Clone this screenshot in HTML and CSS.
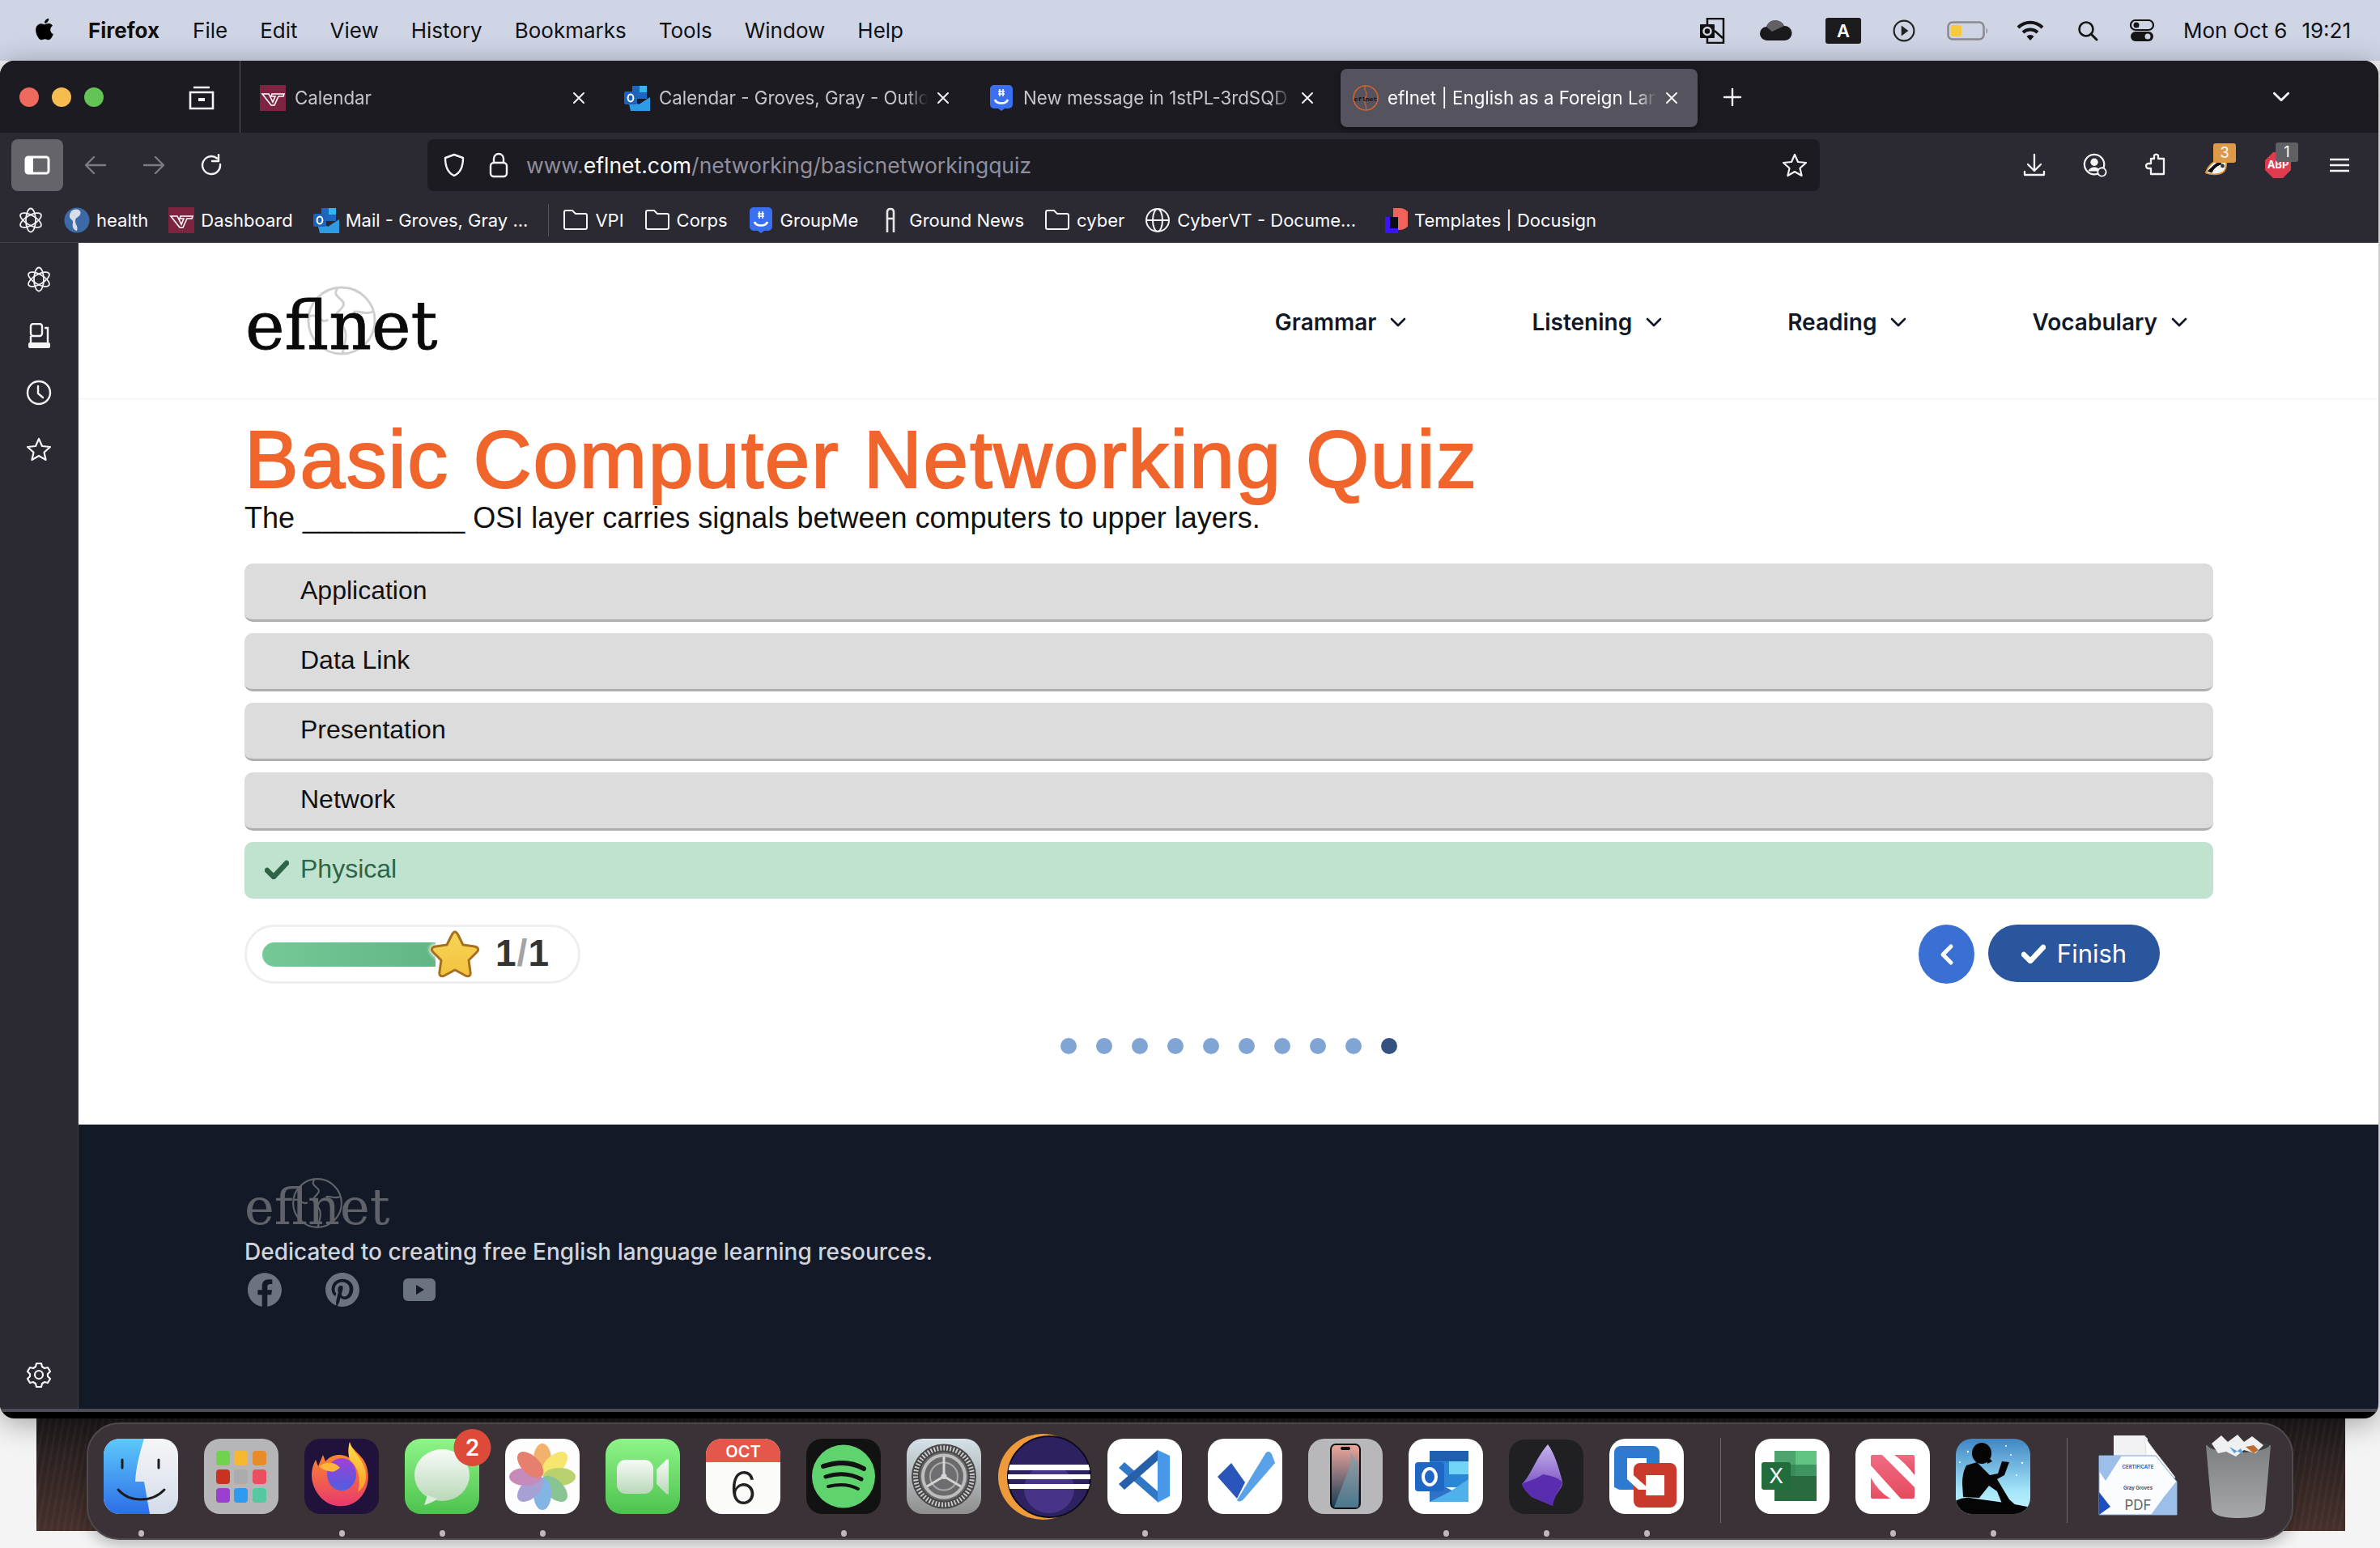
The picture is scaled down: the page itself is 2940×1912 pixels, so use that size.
FILE: index.html
```html
<!DOCTYPE html>
<html lang="en">

<head>
    <meta charset="UTF-8">
    <title>eflnet | English as a Foreign Language</title>
    <link rel="stylesheet" href="styles.css">
</head>

<body>
    <!-- shared icons -->
    <svg class="defs" aria-hidden="true">
        <defs>
            <linearGradient id="gFinder" x1="0" y1="0" x2="0" y2="1"><stop offset="0" stop-color="#5cc9fb"/><stop offset="1" stop-color="#2e6ee8"/></linearGradient>
            <linearGradient id="gFinderR" x1="0" y1="0" x2="0" y2="1"><stop offset="0" stop-color="#f6f6f8"/><stop offset="1" stop-color="#d4dcea"/></linearGradient>
            <linearGradient id="gGreen" x1="0" y1="0" x2="0" y2="1"><stop offset="0" stop-color="#8ef588"/><stop offset="1" stop-color="#4dc24e"/></linearGradient>
            <linearGradient id="gBubble" x1="0" y1="0" x2="0" y2="1"><stop offset="0" stop-color="#f8fbf7"/><stop offset="1" stop-color="#b9d8b9"/></linearGradient>
            <linearGradient id="gFox" x1="0" y1="0" x2="0" y2="1"><stop offset="0" stop-color="#ff9a1f"/><stop offset="1" stop-color="#e8386e"/></linearGradient>
            <linearGradient id="gFlame" x1="0" y1="0" x2="0" y2="1"><stop offset="0" stop-color="#ffe04a"/><stop offset="1" stop-color="#ff9b2a"/></linearGradient>
            <linearGradient id="gFoxIn" x1="0" y1="0" x2="0" y2="1"><stop offset="0" stop-color="#a13fd8"/><stop offset="1" stop-color="#4d5fe0"/></linearGradient>
            <linearGradient id="gSet" x1="0" y1="0" x2="0" y2="1"><stop offset="0" stop-color="#d5e2e8"/><stop offset="1" stop-color="#8e8e8c"/></linearGradient>
            <linearGradient id="gKindle" x1="0" y1="0" x2="0" y2="1"><stop offset="0" stop-color="#3f86c4"/><stop offset=".7" stop-color="#a5e6fa"/><stop offset="1" stop-color="#c6f4ff"/></linearGradient>
            <linearGradient id="gTrash" x1="0" y1="0" x2="0" y2="1"><stop offset="0" stop-color="#7c8082"/><stop offset="1" stop-color="#a6a8a9"/></linearGradient>
            <linearGradient id="gPhone" x1="0" y1="0" x2="0" y2="1"><stop offset="0" stop-color="#f2a79c"/><stop offset="1" stop-color="#123a55"/></linearGradient>
            <linearGradient id="gStar" x1="0" y1="0" x2="0" y2="1"><stop offset="0" stop-color="#f8d558"/><stop offset="1" stop-color="#f2c23e"/></linearGradient>
            <linearGradient id="gObs" x1="0" y1="0" x2="0" y2="1"><stop offset="0" stop-color="#c8b4ef"/><stop offset="1" stop-color="#5a2db0"/></linearGradient>
            <linearGradient id="gNews" x1="0" y1="0" x2="0" y2="1"><stop offset="0" stop-color="#ef6c82"/><stop offset="1" stop-color="#e64a5f"/></linearGradient>

            <clipPath id="clipIcon"><rect width="92" height="93" rx="20"/></clipPath>
            <clipPath id="clipEclipse"><ellipse cx="52" cy="47" rx="51" ry="50"/></clipPath>

            <symbol id="vt" viewBox="0 0 32 32">
                <rect width="32" height="32" fill="#7d2440"/>
                <path d="M3 11h8l5 10 3-7h-5l1-3h15l-1 3h-6l-5 11h-4z" fill="none" stroke="#fff" stroke-width="1.6"/>
            </symbol>
            <symbol id="outlook" viewBox="0 0 32 32">
                <path d="M10 1h18v16H10z" fill="#1f66c1"/>
                <path d="M19 1h9v8h-9z" fill="#35b4f0"/>
                <path d="M4 15l14 9 14-9v17H8z" fill="#2f9be4"/>
                <rect x="0" y="8" width="16" height="16" rx="2" fill="#1e62bc"/>
                <ellipse cx="8" cy="16" rx="3.4" ry="4.4" fill="none" stroke="#fff" stroke-width="2"/>
            </symbol>
            <symbol id="groupme" viewBox="0 0 28 32">
                <path d="M5 0h18a5 5 0 0 1 5 5v19a5 5 0 0 1-5 5h-5l-4 3-4-3H5a5 5 0 0 1-5-5V5a5 5 0 0 1 5-5z" fill="#3a70f0"/>
                <path d="M6 18c2 6 14 6 16 0" fill="none" stroke="#fff" stroke-width="2.6"/>
                <path d="M12 5v9M16 5v9M10 8h8M10 11h8" stroke="#fff" stroke-width="1.6"/>
            </symbol>
            <symbol id="folder" viewBox="0 0 32 26">
                <path d="M2 22V3q0-2 2-2h8l4 4h12q2 0 2 2v15q0 2-2 2H4q-2 0-2-2z" fill="none" stroke="#f4f4f5" stroke-width="2"/>
            </symbol>
            <symbol id="knot" viewBox="0 0 32 32">
                <g fill="none" stroke="#f2f2f3" stroke-width="1.8">
                    <ellipse cx="16" cy="16" rx="6" ry="14.500"/>
                    <ellipse cx="16" cy="16" rx="6" ry="14.500" transform="rotate(60 16 16)"/>
                    <ellipse cx="16" cy="16" rx="6" ry="14.500" transform="rotate(120 16 16)"/>
                </g>
            </symbol>
            <symbol id="outlineStar" viewBox="0 0 32 32">
                <path d="M16 3l4 9 10 1-7.500 6.800L24.600 29 16 24l-8.600 5 2.100-9.200L2 13l10-1z" fill="none" stroke="#f4f4f5" stroke-width="2.200" stroke-linejoin="round"/>
            </symbol>
            <symbol id="close" viewBox="0 0 16 16">
                <path d="M2 2l12 12M14 2L2 14" stroke="#f4f4f5" stroke-width="2" stroke-linecap="round"/>
            </symbol>
            <symbol id="chev" viewBox="0 0 20 12">
                <path d="M2 2l8 8 8-8" fill="none" stroke="currentColor" stroke-width="2.600" stroke-linecap="round" stroke-linejoin="round"/>
            </symbol>
            <symbol id="check" viewBox="0 0 30 24">
                <path d="M3 13l8 8L27 4" fill="none" stroke="currentColor" stroke-width="6.500" stroke-linecap="round" stroke-linejoin="round"/>
            </symbol>
        </defs>
    </svg>

    <header class="menubar">
        <div class="menu-left">
            <svg class="apple" viewBox="0 0 24 24"><path d="M18.710 19.500c-.83 1.240-1.710 2.450-3.050 2.470-1.340.03-1.770-.79-3.290-.79-1.530 0-2 .77-3.270.82-1.310.05-2.300-1.320-3.140-2.530C4.250 17 2.940 12.450 4.700 9.390c.87-1.520 2.430-2.480 4.120-2.510 1.280-.02 2.500.87 3.290.87.78 0 2.260-1.070 3.810-.91.65.03 2.470.26 3.640 1.980-.09.06-2.170 1.280-2.150 3.810.03 3.020 2.650 4.030 2.680 4.040-.03.07-.42 1.440-1.380 2.830M13 3.500c.73-.83 1.940-1.460 2.940-1.500.13 1.170-.34 2.350-1.040 3.190-.69.85-1.830 1.510-2.950 1.420-.15-1.150.41-2.350 1.050-3.110z"/></svg>
            <b>Firefox</b>
            <span>File</span><span>Edit</span><span>View</span><span>History</span><span>Bookmarks</span><span>Tools</span><span>Window</span><span>Help</span>
        </div>
        <div class="menu-right">
            <svg class="st st-o" viewBox="0 0 32 32"><rect x="10" y="1" width="20" height="30" fill="none" stroke="#111" stroke-width="2.500"/><rect x="1" y="8" width="18" height="17" rx="1" fill="#111"/><circle cx="10" cy="16.500" r="4.500" fill="none" stroke="#d0d5e6" stroke-width="2.500"/><path d="M19 16l10 9" stroke="#111" stroke-width="2.500"/></svg>
            <svg class="st st-c" viewBox="0 0 42 26"><path d="M10 25a8.500 8.500 0 0 1-1-17A12 12 0 0 1 31 7a9 9 0 0 1 1 18z" fill="#1a1a1c"/><path d="M9 8A12 12 0 0 1 31 7L16 14z" fill="#606065"/></svg>
            <span class="st st-a">A</span>
            <svg class="st st-p" viewBox="0 0 26 26"><circle cx="13" cy="13" r="11.500" fill="none" stroke="#222" stroke-width="2"/><path d="M10 7l8 6-8 6z" fill="#222"/></svg>
            <svg class="st st-b" viewBox="0 0 52 24"><rect x="1.500" y="1.500" width="44" height="21" rx="5.500" fill="none" stroke="#8a8a8e" stroke-width="2.500"/><rect x="5" y="5" width="13" height="14" rx="2" fill="#f7c93e"/><path d="M48.500 8.500c2 1 2 6 0 7z" fill="#8a8a8e"/></svg>
            <svg class="st st-w" viewBox="0 0 34 26"><g fill="none" stroke="#151515" stroke-width="4"><path d="M2 9a21 21 0 0 1 30 0"/><path d="M8 15a13 13 0 0 1 18 0"/></g><path d="M12.500 20a6 6 0 0 1 9 0L17 25z" fill="#151515"/></svg>
            <svg class="st st-s" viewBox="0 0 26 26"><circle cx="11" cy="11" r="8.500" fill="none" stroke="#151515" stroke-width="2.600"/><path d="M17 17l7 7" stroke="#151515" stroke-width="3" stroke-linecap="round"/></svg>
            <svg class="st st-k" viewBox="0 0 30 28"><rect x="1" y="1" width="28" height="12" rx="6" fill="none" stroke="#151515" stroke-width="2.200"/><circle cx="8" cy="7" r="3.500" fill="#151515"/><rect x="1" y="15" width="28" height="12" rx="6" fill="#151515"/><circle cx="22" cy="21" r="3.500" fill="#d0d5e6"/></svg>
            <span class="clock">Mon Oct 6</span>
            <span class="clock">19:21</span>
        </div>
    </header>

    <div class="window">
        <div class="tabbar">
            <div class="lights"><i class="red"></i><i class="yellow"></i><i class="green"></i></div>
            <svg class="view-btn" viewBox="0 0 34 30"><path d="M7 2h20M3 8h28v20H3z" fill="none" stroke="#f4f4f5" stroke-width="2.600"/><rect x="13" y="15" width="8" height="4" fill="#f4f4f5"/></svg>
            <div class="tabs">
                <div class="tab"><svg class="fav"><use href="#vt"/></svg><span class="tab-title">Calendar</span><svg class="tab-x"><use href="#close"/></svg></div>
                <div class="tab"><svg class="fav"><use href="#outlook"/></svg><span class="tab-title">Calendar - Groves, Gray - Outlook</span><svg class="tab-x"><use href="#close"/></svg></div>
                <div class="tab"><svg class="fav"><use href="#groupme"/></svg><span class="tab-title">New message in 1stPL-3rdSQD</span><svg class="tab-x"><use href="#close"/></svg></div>
                <div class="tab tab-on">
                    <svg class="fav" viewBox="0 0 32 32"><ellipse cx="16" cy="16" rx="15" ry="15" fill="none" stroke="#d9622b" stroke-width="1.500"/><path d="M16 1c-5 6 5 8 0 14s3 10 0 16" fill="none" stroke="#d9622b" stroke-width="1.200"/><text x="16" y="20" class="fav-text">eflnet</text></svg>
                    <span class="tab-title">eflnet | English as a Foreign Language</span><svg class="tab-x"><use href="#close"/></svg>
                </div>
            </div>
            <svg class="new-tab" viewBox="0 0 24 24"><path d="M12 2v20M2 12h20" stroke="#f4f4f5" stroke-width="2.400" stroke-linecap="round"/></svg>
            <svg class="tab-list"><use href="#chev"/></svg>
        </div>

        <div class="toolbar">
            <div class="side-btn"><svg viewBox="0 0 32 24"><rect x="2" y="2" width="28" height="20" rx="3" fill="none" stroke="#fff" stroke-width="3"/><rect x="2" y="2" width="9" height="20" fill="#fff"/></svg></div>
            <svg class="nav-ic first" viewBox="0 0 28 28"><path d="M26 14H3M12 4L2 14l10 10" fill="none" stroke="#7c7b83" stroke-width="2.400" stroke-linecap="round" stroke-linejoin="round"/></svg>
            <svg class="nav-ic" viewBox="0 0 28 28"><path d="M2 14h23M16 4l10 10-10 10" fill="none" stroke="#7c7b83" stroke-width="2.400" stroke-linecap="round" stroke-linejoin="round"/></svg>
            <svg class="nav-ic" viewBox="0 0 28 28"><path d="M24 13A11 11 0 1 1 20 5.500" fill="none" stroke="#f4f4f5" stroke-width="2.400" stroke-linecap="round"/><path d="M22 1v8h-8" fill="none" stroke="#f4f4f5" stroke-width="2.400" stroke-linejoin="round" stroke-linecap="round"/></svg>
            <div class="urlbar">
                <svg class="url-ic" viewBox="0 0 28 30"><path d="M14 2l11 4c0 10-2 18-11 22C5 24 3 16 3 6z" fill="none" stroke="#f4f4f5" stroke-width="2.400" stroke-linejoin="round"/></svg>
                <svg class="url-ic lock" viewBox="0 0 26 32"><rect x="3" y="13" width="20" height="17" rx="4" fill="none" stroke="#f4f4f5" stroke-width="2.400"/><path d="M7 13V8a6 6 0 0 1 12 0v5" fill="none" stroke="#f4f4f5" stroke-width="2.400"/></svg>
                <div class="url-text">www.<em>eflnet.com</em>/networking/basicnetworkingquiz</div>
                <svg class="url-star"><use href="#outlineStar"/></svg>
            </div>
            <div class="tool-right">
                <svg class="tool-ic" viewBox="0 0 30 30"><path d="M15 2v19M7 14l8 8 8-8M3 23v4h24v-4" fill="none" stroke="#f4f4f5" stroke-width="2.300" stroke-linecap="round" stroke-linejoin="round"/></svg>
                <svg class="tool-ic" viewBox="0 0 32 32"><circle cx="15" cy="15" r="13" fill="none" stroke="#f4f4f5" stroke-width="2.400"/><circle cx="15" cy="12" r="5" fill="#f4f4f5"/><path d="M7 24c2-7 14-7 16 0" fill="#f4f4f5"/><circle cx="25" cy="25" r="5.500" fill="#2b2a33" stroke="#f4f4f5" stroke-width="2"/></svg>
                <svg class="tool-ic" viewBox="0 0 30 30"><path d="M13 3a3 3 0 0 1 5 0v4h7v19H9v-7H6a3 3 0 0 1 0-6h3V7h4z" fill="none" stroke="#f4f4f5" stroke-width="2.300" stroke-linejoin="round"/></svg>
                <div class="ext">
                    <svg class="tool-ic" viewBox="0 0 32 28"><path d="M2 24c2-8 10-16 20-20 4 0 6 2 7 6 0 4 0 10-4 13-6 4-16 4-23 1z" fill="#f4f4f5" stroke="#dd8a35" stroke-width="2"/><path d="M4 22c6-6 10-10 17-14l2 5c-6 2-10 5-13 11z" fill="#0c0c0c"/><circle cx="24" cy="15" r="2.500" fill="#333"/></svg>
                    <span class="badge badge-o">3</span>
                </div>
                <div class="ext">
                    <svg class="tool-ic abp" viewBox="0 0 32 32"><path d="M10 0h12l10 10v12L22 32H10L0 22V10z" fill="#de3a50"/><text x="16" y="20" class="abp-text">ABP</text></svg>
                    <span class="badge badge-g">1</span>
                </div>
                <svg class="tool-ic burger" viewBox="0 0 24 18"><path d="M0 2h24M0 9h24M0 16h24" stroke="#f4f4f5" stroke-width="2.400"/></svg>
            </div>
        </div>

        <div class="bookmarks">
            <svg class="bm-ic"><use href="#knot"/></svg>
            <a class="bm"><svg class="bm-ic" viewBox="0 0 32 32"><circle cx="16" cy="16" r="15.500" fill="#3c69a8"/><path d="M12 3c6-2 10 2 8 6s-6 3-6 8 4 6 2 12c-5-1-6-6-5-10S6 15 7 10s3-6 5-7z" fill="#d8dee8"/></svg>health</a>
            <a class="bm"><svg class="bm-ic"><use href="#vt"/></svg>Dashboard</a>
            <a class="bm"><svg class="bm-ic"><use href="#outlook"/></svg>Mail - Groves, Gray ...</a>
            <i class="bm-sep"></i>
            <a class="bm"><svg class="bm-ic folder"><use href="#folder"/></svg>VPI</a>
            <a class="bm"><svg class="bm-ic folder"><use href="#folder"/></svg>Corps</a>
            <a class="bm"><svg class="bm-ic"><use href="#groupme"/></svg>GroupMe</a>
            <a class="bm"><svg class="bm-ic ground" viewBox="0 0 14 32"><path d="M3 31V6q0-4 4-4t4 4v25M3 14h8" fill="none" stroke="#e6e6e6" stroke-width="2.600"/></svg>Ground News</a>
            <a class="bm"><svg class="bm-ic folder"><use href="#folder"/></svg>cyber</a>
            <a class="bm"><svg class="bm-ic" viewBox="0 0 32 32"><g fill="none" stroke="#f4f4f5" stroke-width="2"><circle cx="16" cy="16" r="14"/><ellipse cx="16" cy="16" rx="6" ry="14"/><path d="M2 16h28"/></g></svg>CyberVT - Docume...</a>
            <a class="bm bm-last"><svg class="bm-ic" viewBox="0 0 32 32"><path d="M14 1h8a10 10 0 0 1 0 27h-8z" fill="#f0625a"/><rect x="4" y="12" width="16" height="20" fill="#3d14f5"/><rect x="10" y="12" width="10" height="14" fill="#0b0b10"/></svg>Templates | Docusign</a>
        </div>

        <div class="content">
            <aside class="sidebar">
                <svg class="side-ic"><use href="#knot"/></svg>
                <svg class="side-ic" viewBox="0 0 32 32"><rect x="6" y="1" width="14" height="15" rx="3" fill="none" stroke="#f4f4f5" stroke-width="2.400"/><path d="M23 6h4v18M6 16v8" fill="none" stroke="#f4f4f5" stroke-width="2.400"/><rect x="3" y="24" width="27" height="7" rx="2" fill="#f4f4f5"/></svg>
                <svg class="side-ic" viewBox="0 0 32 32"><circle cx="16" cy="16" r="14" fill="none" stroke="#f4f4f5" stroke-width="2.400"/><path d="M15 8v9l6 5" fill="none" stroke="#f4f4f5" stroke-width="2.400" stroke-linecap="round"/></svg>
                <svg class="side-ic"><use href="#outlineStar"/></svg>
                <svg class="side-ic gear" viewBox="0 0 32 32"><path d="M13 2h6l1 4 3 2 4-1 3 5-3 3v3l3 3-3 5-4-1-3 2-1 4h-6l-1-4-3-2-4 1-3-5 3-3v-3L2 12l3-5 4 1 3-2z" fill="none" stroke="#f4f4f5" stroke-width="2.200" stroke-linejoin="round"/><circle cx="16" cy="16" r="5" fill="none" stroke="#f4f4f5" stroke-width="2.200"/></svg>
            </aside>

            <main class="page">
                <div class="site-head">
                    <div class="logo">
                        <svg class="logo-globe" viewBox="0 0 90 90"><g fill="none" stroke="#cfcfcf" stroke-width="3"><circle cx="45" cy="45" r="42"/><path d="M40 4c-10 12 14 14 6 24s-12 8-4 18 12 14 4 40M4 40c10-6 14 10 24 4M60 34c8-2 14 4 24 0"/></g></svg>
                        <span class="logo-text">eflnet</span>
                    </div>
                    <nav class="site-nav">
                        <a>Grammar<svg class="nav-chev"><use href="#chev"/></svg></a>
                        <a>Listening<svg class="nav-chev"><use href="#chev"/></svg></a>
                        <a>Reading<svg class="nav-chev"><use href="#chev"/></svg></a>
                        <a>Vocabulary<svg class="nav-chev"><use href="#chev"/></svg></a>
                    </nav>
                </div>

                <section class="quiz">
                    <h1>Basic Computer Networking Quiz</h1>
                    <p class="question">The __________ OSI layer carries signals between computers to upper layers.</p>
                    <ul class="options">
                        <li>Application</li>
                        <li>Data Link</li>
                        <li>Presentation</li>
                        <li>Network</li>
                        <li class="correct"><svg class="opt-check"><use href="#check"/></svg>Physical</li>
                    </ul>
                    <div class="quiz-foot">
                        <div class="progress">
                            <div class="bar"></div>
                            <svg class="star" viewBox="0 0 66 64"><path d="M33 4c2 0 3 2 4 4l6 12 14 2c5 1 6 4 3 7L50 39l2 14c1 5-2 7-6 5L33 51l-13 7c-4 2-7 0-6-5l2-14L6 29c-3-3-2-6 3-7l14-2 6-12c1-2 2-4 4-4z" fill="url(#gStar)" stroke="#a6701f" stroke-width="3" stroke-linejoin="round"/></svg>
                            <span class="count">1<em>/</em>1</span>
                        </div>
                        <div class="quiz-btns">
                            <button class="back"><svg viewBox="0 0 20 28"><path d="M15 4L5 14l10 10" fill="none" stroke="#fff" stroke-width="5" stroke-linecap="round" stroke-linejoin="round"/></svg></button>
                            <button class="finish"><svg class="finish-check"><use href="#check"/></svg>Finish</button>
                        </div>
                    </div>
                    <div class="dots"><i></i><i></i><i></i><i></i><i></i><i></i><i></i><i></i><i></i><i class="on"></i></div>
                </section>

                <footer class="site-foot">
                    <div class="logo logo-small">
                        <svg class="logo-globe" viewBox="0 0 90 90"><g fill="none" stroke="#5f6268" stroke-width="3"><circle cx="45" cy="45" r="42"/><path d="M40 4c-10 12 14 14 6 24s-12 8-4 18 12 14 4 40M4 40c10-6 14 10 24 4M60 34c8-2 14 4 24 0"/></g></svg>
                        <span class="logo-text">eflnet</span>
                    </div>
                    <p class="tagline">Dedicated to creating free English language learning resources.</p>
                    <div class="social">
                        <svg viewBox="0 0 24 24"><path d="M24 12.073c0-6.627-5.373-12-12-12s-12 5.373-12 12c0 5.990 4.388 10.954 10.125 11.854v-8.385H7.078v-3.470h3.047V9.430c0-3.007 1.792-4.669 4.533-4.669 1.312 0 2.686.235 2.686.235v2.953H15.830c-1.491 0-1.956.925-1.956 1.874v2.250h3.328l-.532 3.470h-2.796v8.385C19.612 23.027 24 18.062 24 12.073z"/></svg>
                        <svg viewBox="0 0 24 24"><path d="M12.017 0C5.396 0 .029 5.367.029 11.987c0 5.079 3.158 9.417 7.618 11.162-.105-.949-.199-2.403.041-3.439.219-.937 1.406-5.957 1.406-5.957s-.359-.72-.359-1.781c0-1.663.967-2.911 2.168-2.911 1.024 0 1.518.769 1.518 1.688 0 1.029-.653 2.567-.992 3.992-.285 1.193.6 2.165 1.775 2.165 2.128 0 3.768-2.245 3.768-5.487 0-2.861-2.063-4.869-5.008-4.869-3.410 0-5.409 2.562-5.409 5.199 0 1.033.394 2.143.889 2.741.099.12.112.225.085.345-.09.375-.293 1.199-.334 1.363-.053.225-.172.271-.401.165-1.495-.69-2.433-2.878-2.433-4.646 0-3.776 2.748-7.252 7.920-7.252 4.158 0 7.392 2.967 7.392 6.923 0 4.135-2.607 7.462-6.233 7.462-1.214 0-2.354-.629-2.758-1.379l-.749 2.848c-.269 1.045-1.004 2.352-1.498 3.146 1.123.345 2.306.535 3.550.535 6.607 0 11.985-5.365 11.985-11.987C23.970 5.390 18.592.026 11.985.026L12.017 0z"/></svg>
                        <svg class="yt" viewBox="0 0 40 28"><rect width="40" height="28" rx="6" fill="#6b7280"/><path d="M16 8l10 6-10 6z" fill="#141928"/></svg>
                    </div>
                </footer>
            </main>
        </div>
    </div>

    <div class="wallpaper"></div>

    <div class="dock">
        <div class="dock-item on"><svg viewBox="0 0 92 93"><rect width="92" height="93" rx="20" fill="url(#gFinderR)"/><path d="M20 0H50C44 20 40 35 39 53H50L57 93H20A20 20 0 0 1 0 73V20A20 20 0 0 1 20 0Z" fill="url(#gFinder)"/><path d="M23 26v10M68 26v10" stroke="#1c1c1e" stroke-width="3" stroke-linecap="round"/><path d="M18 63c14 16 42 16 57 0" fill="none" stroke="#1c1c1e" stroke-width="3" stroke-linecap="round"/></svg><i></i></div>
        <div class="dock-item"><svg viewBox="0 0 92 93"><rect width="92" height="93" rx="20" fill="#b6b6b8"/><g><rect x="15" y="15" width="17" height="18" rx="4" fill="#6fd34f"/><rect x="37" y="15" width="17" height="18" rx="4" fill="#f5b82e"/><rect x="60" y="15" width="17" height="18" rx="4" fill="#e88b2b"/><rect x="15" y="38" width="17" height="18" rx="4" fill="#c8321f"/><rect x="37" y="38" width="17" height="18" rx="4" fill="#a9adb0"/><rect x="60" y="38" width="17" height="18" rx="4" fill="#ea4f5f"/><rect x="15" y="61" width="17" height="18" rx="4" fill="#9a3fd0"/><rect x="37" y="61" width="17" height="18" rx="4" fill="#2e9bf0"/><rect x="60" y="61" width="17" height="18" rx="4" fill="#55c8a2"/></g></svg><i class="none"></i></div>
        <div class="dock-item on"><svg viewBox="0 0 92 93"><rect width="92" height="93" rx="20" fill="#20123a"/><path d="M56 4c2 10 16 16 20 28 6 16 2 32-8 42-12 12-32 12-44 2C10 64 4 44 14 26l3 8 6-14 3 8c8-10 22-10 30-4-2-6-2-14 0-20z" fill="url(#gFox)"/><path d="M56 4c2 12 18 20 20 40 1 10-4 18-10 22 4-14 2-30-10-40-2-6-2-14 0-22z" fill="url(#gFlame)"/><ellipse cx="46" cy="44" rx="18" ry="20" fill="url(#gFoxIn)"/><path d="M18 34c8-6 20-6 26 2-6 4-8 6-14 4-4-1-8-2-12-6z" fill="#ffb63a"/></svg><i></i></div>
        <div class="dock-item on"><svg viewBox="0 0 92 93"><rect width="92" height="93" rx="20" fill="url(#gGreen)"/><ellipse cx="46" cy="45" rx="34" ry="32" fill="url(#gBubble)"/><path d="M28 70l-4 12c6-2 12-4 16-8z" fill="#dcebd9"/><circle cx="83.500" cy="11" r="23" fill="#dd4a3a"/><text x="83.500" y="21" class="dock-badge">2</text></svg><i></i></div>
        <div class="dock-item on"><svg viewBox="0 0 92 93"><rect width="92" height="93" rx="20" fill="#fdfdfd"/><g opacity=".75"><ellipse cx="46" cy="26" rx="11" ry="20" fill="#ef9a3c"/><ellipse cx="46" cy="26" rx="11" ry="20" fill="#f5df3f" transform="rotate(45 46 47)"/><ellipse cx="46" cy="26" rx="11" ry="20" fill="#a3c43f" transform="rotate(90 46 47)"/><ellipse cx="46" cy="26" rx="11" ry="20" fill="#62b36f" transform="rotate(135 46 47)"/><ellipse cx="46" cy="26" rx="11" ry="20" fill="#5b9ddc" transform="rotate(180 46 47)"/><ellipse cx="46" cy="26" rx="11" ry="20" fill="#8a82c8" transform="rotate(225 46 47)"/><ellipse cx="46" cy="26" rx="11" ry="20" fill="#b365a5" transform="rotate(270 46 47)"/><ellipse cx="46" cy="26" rx="11" ry="20" fill="#e0553f" transform="rotate(315 46 47)"/></g></svg><i></i></div>
        <div class="dock-item"><svg viewBox="0 0 92 93"><rect width="92" height="93" rx="20" fill="url(#gGreen)"/><rect x="14" y="26" width="45" height="42" rx="11" fill="url(#gBubble)"/><path d="M78 27v40c0 2-2 2-3 1L63 56V38l12-12c1-1 3-1 3 1z" fill="url(#gBubble)"/></svg><i class="none"></i></div>
        <div class="dock-item"><svg viewBox="0 0 92 93"><rect width="92" height="93" rx="20" fill="#fbfbfa"/><path d="M0 29V20A20 20 0 0 1 20 0H72A20 20 0 0 1 92 20V29Z" fill="#e4574b"/><text x="46" y="23" class="cal-mon">OCT</text><text x="46" y="81" class="cal-day">6</text></svg><i class="none"></i></div>
        <div class="dock-item on"><svg viewBox="0 0 92 93"><rect width="92" height="93" rx="20" fill="#121212"/><circle cx="46" cy="46.500" r="39" fill="#5fd46e"/><g fill="none" stroke="#121212" stroke-linecap="round"><path d="M21 34c18-6 36-5 50 3" stroke-width="6"/><path d="M24 47c15-5 31-4 44 3" stroke-width="5"/><path d="M27 59c12-3 26-3 37 3" stroke-width="4"/></g></svg><i></i></div>
        <div class="dock-item"><svg viewBox="0 0 92 93"><rect width="92" height="93" rx="20" fill="url(#gSet)"/><circle cx="46" cy="46.500" r="40" fill="#48484a"/><circle cx="46" cy="46.500" r="35" fill="none" stroke="#d0d0d0" stroke-width="6" stroke-dasharray="1.800 2.200"/><circle cx="46" cy="46.500" r="30" fill="#6a6a6c"/><circle cx="46" cy="46.500" r="26" fill="none" stroke="#bdbdbd" stroke-width="4"/><circle cx="46" cy="46.500" r="17" fill="#6e6e70" stroke="#a9a9a9" stroke-width="2"/><path d="M46 46.500V22M46 46.500L25 59M46 46.500L67 59" stroke="#d4d4d4" stroke-width="3"/><circle cx="46" cy="46.500" r="3.500" fill="#d4d4d4"/></svg><i class="none"></i></div>
        <div class="dock-item"><svg viewBox="0 0 92 93"><ellipse cx="44" cy="47" rx="55" ry="53" fill="#ee9a3b"/><ellipse cx="52" cy="47" rx="51" ry="50" fill="#2e2160" stroke="#0d0a1c" stroke-width="2"/><ellipse cx="52" cy="62" rx="31" ry="30" fill="#473487"/><g clip-path="url(#clipEclipse)" fill="#fff"><rect x="0" y="32" width="104" height="7"/><rect x="0" y="44" width="104" height="6"/><rect x="0" y="56" width="104" height="6"/></g></svg><i class="none"></i></div>
        <div class="dock-item on"><svg viewBox="0 0 92 93"><rect width="92" height="93" rx="20" fill="#fff"/><path d="M62 14v64L14 36l7-7 41 36z" fill="#3078c6"/><path d="M62 14L14 56l7 7 41-36z" fill="#2560a8"/><path d="M62 14l15 7v50l-15 8z" fill="#4798e8"/></svg><i></i></div>
        <div class="dock-item"><svg viewBox="0 0 92 93"><rect width="92" height="93" rx="20" fill="#fff"/><path d="M12 47l17-17 17 24-10 20z" fill="#2a55bb"/><path d="M36 76L72 17c3-2 5-1 7 2l4 11-39 45c-3 3-6 3-8 1z" fill="#5aa2e8"/></svg><i class="none"></i></div>
        <div class="dock-item"><svg viewBox="0 0 92 93"><rect width="92" height="93" rx="20" fill="#b8b8ba"/><rect x="28" y="7" width="36" height="79" rx="6" fill="url(#gPhone)" stroke="#111" stroke-width="2"/><path d="M46 9c14 12 4 28-14 76h30V30z" fill="#6fa0b0" opacity=".6"/><rect x="40" y="10" width="12" height="4" rx="2" fill="#111"/></svg><i class="none"></i></div>
        <div class="dock-item on"><svg viewBox="0 0 92 93"><rect width="92" height="93" rx="20" fill="#fff"/><path d="M26 15H74V28H26z" fill="#1f5fb0"/><path d="M26 28H74V60H26z" fill="#2a87d8"/><path d="M50 28H74V44H50z" fill="#72d4f6"/><path d="M26 50L74 74V78H26z" fill="#2f73c6"/><path d="M26 78H74V50L50 66z" fill="#4fb0ea"/><rect x="8" y="29" width="36" height="36" rx="4" fill="#1f67c4"/><ellipse cx="26" cy="47" rx="8" ry="10" fill="none" stroke="#fff" stroke-width="4"/></svg><i></i></div>
        <div class="dock-item on"><svg viewBox="0 0 92 93"><rect y="1" width="92" height="92" rx="20" fill="#202022"/><path d="M48 7c8 10 14 30 18 46 2 8-10 14-12 30L28 72c-6-6-10-10-12-16 12-12 16-30 32-49z" fill="url(#gObs)"/><path d="M16 56c8-4 18-6 26-12 10 2 20 4 24 10-2 8-10 14-12 29L28 72c-6-6-10-10-12-16z" fill="#5a2db0"/></svg><i></i></div>
        <div class="dock-item on"><svg viewBox="0 0 92 93"><rect width="92" height="93" rx="20" fill="#fff"/><rect x="6" y="9" width="56" height="54" rx="8" fill="#2e7ad0"/><rect x="22" y="24" width="24" height="24" fill="#fff"/><rect x="30" y="30" width="53" height="55" rx="8" fill="#c93a2d"/><rect x="45" y="45" width="23" height="25" fill="#fff"/><path d="M22 38L50 63H36L22 50z" fill="#fff"/><path d="M6 50L30 63H14L6 60z" fill="#2e7ad0"/></svg><i></i></div>
        <span class="dock-sep"></span>
        <div class="dock-item"><svg viewBox="0 0 92 93"><rect width="92" height="93" rx="20" fill="#fff"/><path d="M24 15H76V77H24z" fill="#2a6a3f"/><path d="M24 15H76V32H24z" fill="#4ea46f"/><path d="M50 15H76V32H50z" fill="#62c483"/><path d="M50 32H76V46H50z" fill="#3f9560"/><path d="M24 32H50V46H24z" fill="#398a58"/><rect x="8" y="29" width="36" height="34" rx="3" fill="#226c3c"/><text x="26" y="55" class="xl">X</text></svg><i class="none"></i></div>
        <div class="dock-item on"><svg viewBox="0 0 92 93"><rect width="92" height="93" rx="20" fill="#fff"/><g fill="url(#gNews)"><path d="M19 22q0-2 2-2H33L73 60V72q0 2-2 2H56L19 33Z"/><path d="M19 48Q28 65 43 74H21q-2 0-2-2Z"/><path d="M48 20H71q2 0 2 2V45Q62 30 48 20Z"/></g></svg><i></i></div>
        <div class="dock-item on"><svg viewBox="0 0 92 93"><rect width="92" height="93" rx="20" fill="url(#gKindle)"/><g fill="#fff"><circle cx="15" cy="16" r="1.200"/><circle cx="62" cy="9" r="1"/><circle cx="82" cy="30" r="1.200"/><circle cx="68" cy="20" r="1"/><circle cx="5" cy="29" r="1"/><circle cx="75" cy="45" r="1"/></g><g clip-path="url(#clipIcon)" fill="#050505"><ellipse cx="32" cy="18" rx="12" ry="13"/><path d="M38 20l7 8-6 3z"/><path d="M26 29L13 33Q8 42 8 55L9 72 29 73 41 58 51 65 57 80 76 84 66 75 51 50 60 45 66 29 57 28 52 43 42 45 32 35Z"/><path d="M-1 77Q8 72 17 73L60 79Q80 82 92 85V93H-1Z"/></g></svg><i></i></div>
        <span class="dock-sep sep2"></span>
        <div class="dock-item doc"><svg viewBox="0 0 96 95"><path d="M18 -4H56L60 0V26H18z" fill="#f2f2f4"/><path d="M56-4c4 10 22 30 38 52H72c-14 0-16-14-14-32z" fill="#fdfdfd" stroke="#ddd"/><path d="M0 21H70L96 53V94H0z" fill="#fbfcfe" stroke="#7ba3d9"/><path d="M0 21H20L28 21L8 52L0 40zM80 72l-16 22h32V52z" fill="#9cbfe9"/><path d="M0 66L14 84 0 94z" fill="#1e4fc0"/><text x="48" y="37" class="cert">CERTIFICATE</text><text x="48" y="63" class="cert gray">Gray Groves</text><text x="48" y="88" class="pdf">PDF</text></svg><i class="none"></i></div>
        <div class="dock-item trash"><svg viewBox="0 0 82 105"><path d="M1 14L8 92c1 8 12 12 33 12s32-4 33-12l7-78z" fill="url(#gTrash)"/><path d="M2 14c8 12 70 12 78 0-8-8-70-8-78 0z" fill="#3c3c3e"/><path d="M8 12l12-10 8 8 12-9 8 9 10-7 14 11-10 10-14-4-10 8-12-6-10 2z" fill="#eef0f1"/><path d="M30 16l6 8 8-6 4 8z" fill="#5c9fd0"/><path d="M50 16l10 8 6-4-6-6z" fill="#bf6a30"/></svg><i class="none"></i></div>
    </div>
</body>

</html>
```

FILE: styles.css
```css
html,
body {
    margin: 0;
    padding: 0;
}

body {
    position: relative;
    width: 2940px;
    height: 1912px;
    overflow: hidden;
    background-color: #f4f4f4;
    font-family: Inter, "Liberation Sans", sans-serif;
}

.defs {
    display: block;
    width: 0;
    height: 0;
}

/* macOS menu bar */
.menubar {
    height: 75px;
    background-color: #d0d5e6;
    display: flex;
    align-items: center;
    justify-content: space-between;
    color: #111;
    font-size: 26px;
}

.menu-left {
    display: flex;
    align-items: center;
    gap: 40px;
    padding-left: 39px;
}

.menu-left b {
    font-weight: 700;
    margin-left: -2px;
    margin-right: 1px;
}

.apple {
    width: 32px;
    height: 32px;
    margin-top: -4px;
}

.menu-right {
    display: flex;
    align-items: center;
    padding-right: 36px;
}

.st {
    display: block;
}

.st-o {
    width: 32px;
    height: 32px;
    margin-right: 42px;
}

.st-c {
    width: 42px;
    height: 26px;
    margin-right: 40px;
}

.st-a {
    width: 44px;
    height: 32px;
    background-color: #1c1c1e;
    border-radius: 3px;
    color: #fff;
    font-size: 22px;
    font-weight: 600;
    text-align: center;
    line-height: 32px;
    margin-right: 39px;
}

.st-p {
    width: 28px;
    height: 28px;
    margin-right: 39px;
}

.st-b {
    width: 52px;
    height: 24px;
    margin-right: 34px;
}

.st-w {
    width: 34px;
    height: 26px;
    margin-right: 41px;
}

.st-s {
    width: 26px;
    height: 26px;
    margin-right: 39px;
}

.st-k {
    width: 30px;
    height: 28px;
    margin-right: 36px;
}

.clock {
    margin-right: 18px;
}

.clock:last-child {
    margin-right: 0;
}

/* browser window */
.window {
    width: 2938px;
    height: 1677px;
    background-color: #000;
    border-radius: 18px;
    box-shadow: 0 6px 36px rgba(0, 0, 0, .35);
    position: relative;
    z-index: 1;
    overflow: hidden;
}

.tabbar {
    height: 89px;
    background-color: #1c1b22;
    display: flex;
    align-items: center;
    position: relative;
}

.lights {
    display: flex;
    gap: 16px;
    padding-left: 24px;
}

.lights i {
    width: 24px;
    height: 24px;
    border-radius: 50%;
}

.lights .red {
    background-color: #ee6a5e;
}

.lights .yellow {
    background-color: #f5bd4f;
}

.lights .green {
    background-color: #61c454;
}

.view-btn {
    width: 34px;
    height: 30px;
    margin-left: 104px;
    margin-right: 30px;
    margin-top: 2px;
}

.tabs {
    height: 100%;
    display: flex;
    align-items: center;
    gap: 9px;
    border-left: 1px solid #55555c;
    padding-left: 9px;
}

.tab {
    width: 441px;
    height: 72px;
    box-sizing: border-box;
    display: flex;
    align-items: center;
    gap: 11px;
    padding: 0 24px 0 15px;
    border-radius: 8px;
    color: #c6c6ca;
    font-size: 22.3px;
    margin-top: 2px;
}

.tab-on {
    background-color: #55535d;
    color: #fbfbfe;
    box-shadow: 0 2px 6px rgba(0, 0, 0, .5);
}

.fav {
    width: 32px;
    height: 32px;
    flex: none;
}

.fav-text {
    font-family: "Liberation Mono", monospace;
    font-size: 8px;
    font-weight: 700;
    text-anchor: middle;
    fill: #111;
}

.tab-title {
    flex: 1;
    min-width: 0;
    white-space: nowrap;
    overflow: hidden;
    -webkit-mask-image: linear-gradient(to right, #000 92%, transparent);
    mask-image: linear-gradient(to right, #000 92%, transparent);
}

.tab-x {
    width: 16px;
    height: 16px;
    flex: none;
}

.new-tab {
    width: 24px;
    height: 24px;
    margin-left: 31px;
}

.tab-list {
    width: 22px;
    height: 13px;
    position: absolute;
    right: 109px;
    top: 38px;
    color: #f4f4f5;
}

.toolbar {
    height: 78px;
    box-sizing: border-box;
    padding: 2px 0 0 14px;
    background-color: #2b2a33;
    display: flex;
    align-items: center;
}

.side-btn {
    width: 64px;
    height: 64px;
    background-color: #65646b;
    border-radius: 8px;
    display: flex;
    align-items: center;
    justify-content: center;
}

.side-btn svg {
    width: 32px;
    height: 24px;
}

.nav-ic {
    width: 28px;
    height: 28px;
    margin-left: 44px;
}

.nav-ic.first {
    margin-left: 26px;
}

.urlbar {
    width: 1720px;
    height: 64px;
    margin-left: 252px;
    background-color: #1c1b22;
    border-radius: 8px;
    display: flex;
    align-items: center;
    box-sizing: border-box;
    padding: 0 15px 0 19px;
}

.url-ic {
    width: 28px;
    height: 30px;
}

.url-ic.lock {
    width: 26px;
    height: 32px;
    margin-left: 28px;
}

.url-text {
    flex: 1;
    margin-left: 21px;
    color: #8f8f9d;
    font-size: 26.5px;
    white-space: nowrap;
}

.url-text em {
    font-style: normal;
    color: #fbfbfe;
}

.url-star {
    width: 32px;
    height: 32px;
}

.tool-right {
    display: flex;
    align-items: center;
    margin-left: 250px;
    gap: 45px;
}

.tool-ic {
    width: 30px;
    height: 30px;
    display: block;
}

.tool-ic.abp {
    width: 32px;
    height: 32px;
}

.ext {
    position: relative;
}

.badge {
    position: absolute;
    top: -12px;
    left: 11px;
    width: 28px;
    height: 24px;
    border-radius: 3px;
    font-size: 18px;
    line-height: 24px;
    text-align: center;
    color: #fff;
}

.badge-o {
    background-color: #dd9a48;
}

.badge-g {
    left: 13px;
    background-color: #5f6064;
}

.abp-text {
    font-size: 13px;
    font-weight: 700;
    fill: #fff;
    text-anchor: middle;
}

.burger {
    width: 24px;
    height: 18px;
    margin-left: 3px;
}

.bookmarks {
    height: 58px;
    background-color: #2b2a33;
    border-bottom: 1px solid #3d3c45;
    box-sizing: border-box;
    display: flex;
    align-items: center;
    gap: 25px;
    padding: 2px 0 0 22px;
    color: #fbfbfe;
    font-size: 22px;
}

.bm {
    display: flex;
    align-items: center;
    gap: 8px;
    white-space: nowrap;
}

.bm-last {
    margin-left: 7px;
}

.bm-ic {
    width: 32px;
    height: 32px;
    flex: none;
}

.folder {
    height: 26px;
}

.ground {
    width: 14px;
    margin: 0 8px;
}

.bm-sep {
    width: 1px;
    height: 40px;
    margin-right: -8px;
    background-color: #55555c;
}

.content {
    height: 1444px;
    display: flex;
}

.sidebar {
    width: 97px;
    height: 1444px;
    box-sizing: border-box;
    flex: none;
    background-color: #2b2a33;
    border-right: 1px solid #3d3c45;
    border-bottom: 4px solid #4b4c57;
    display: flex;
    flex-direction: column;
    align-items: center;
}

.side-ic {
    width: 32px;
    height: 32px;
    margin-top: 38px;
}

.side-ic:first-child {
    margin-top: 29px;
}

.gear {
    margin-top: auto;
    margin-bottom: 26px;
}

/* eflnet page */
.page {
    flex: 1;
    min-width: 0;
    background-color: #fff;
    display: flex;
    flex-direction: column;
    font-family: "Liberation Sans", Arial, sans-serif;
}

.site-head {
    height: 193px;
    box-sizing: border-box;
    border-bottom: 1px solid #f1f2f4;
    display: flex;
    align-items: center;
    padding: 0 236px 0 206px;
    justify-content: space-between;
}

.logo {
    position: relative;
    display: inline-block;
    width: 240px;
    height: 90px;
    line-height: 103px;
}

.logo-text {
    position: relative;
    font-family: "DejaVu Serif", "Liberation Serif", serif;
    font-size: 82px;
    -webkit-text-stroke: .8px #0a0a0a;
    color: #0a0a0a;
}

.logo-globe {
    position: absolute;
    left: 75px;
    top: 1px;
    width: 88px;
    height: 88px;
}

.site-nav {
    display: flex;
    gap: 155px;
    font-family: Inter, "Liberation Sans", sans-serif;
    font-size: 28px;
    font-weight: 600;
    color: #111827;
    margin-top: 4px;
}

.site-nav a {
    display: flex;
    align-items: center;
    gap: 17px;
}

.nav-chev {
    width: 20px;
    height: 12px;
}

.quiz {
    height: 896px;
    box-sizing: border-box;
    padding: 24px 204px 0 205px;
}

h1 {
    margin: 0;
    font-size: 100px;
    line-height: 100px;
    font-weight: 400;
    letter-spacing: 1.7px;
    -webkit-text-stroke: 2px #f0652c;
    color: #f0652c;
    white-space: nowrap;
}

.question {
    margin: 0;
    font-size: 36px;
    line-height: 45px;
    color: #111;
    white-space: nowrap;
}

.options {
    list-style: none;
    margin: 34px 0 0;
    padding: 0;
    display: flex;
    flex-direction: column;
    gap: 14px;
}

.options li {
    height: 72px;
    box-sizing: border-box;
    background-color: #dcdcdc;
    border-bottom: 3px solid #aeaeae;
    border-radius: 10px;
    padding-left: 69px;
    font-size: 32px;
    line-height: 66px;
    color: #111;
}

.options .correct {
    height: 70px;
    border-bottom: 0;
    background-color: #c0e3cf;
    color: #2f6547;
    position: relative;
}

.opt-check {
    position: absolute;
    left: 25px;
    top: 22px;
    width: 30px;
    height: 24px;
    color: #2f6547;
}

.quiz-foot {
    display: flex;
    justify-content: space-between;
    align-items: flex-start;
    margin-top: 32px;
    padding-right: 66px;
}

.progress {
    width: 415px;
    height: 73px;
    box-sizing: border-box;
    border: 3px solid #eeeeee;
    border-radius: 37px;
    display: flex;
    align-items: center;
    padding-left: 19px;
}

.bar {
    width: 214px;
    height: 30px;
    border-radius: 15px 0 0 15px;
    background: linear-gradient(to right, #74c997, #62b585);
}

.star {
    width: 66px;
    height: 64px;
    margin-left: -9px;
    filter: drop-shadow(0 0 2px #fff) drop-shadow(0 0 2px #fff);
}

.count {
    margin: -3px 0 0 17px;
    font-size: 46px;
    font-weight: 700;
    letter-spacing: 1px;
    color: #333;
}

.count em {
    font-style: normal;
    color: #a3a3a3;
}

.quiz-btns {
    display: flex;
    gap: 17px;
}

button {
    border: none;
    padding: 0;
    color: #fff;
    font-family: Inter, "Liberation Sans", sans-serif;
}

.back {
    width: 69px;
    height: 73px;
    border-radius: 50%;
    background-color: #3a70d4;
}

.back svg {
    display: block;
    width: 20px;
    height: 28px;
    margin: 0 auto;
}

.finish {
    width: 212px;
    height: 71px;
    border-radius: 36px;
    background-color: #2a569e;
    font-size: 31px;
    display: flex;
    align-items: center;
    justify-content: center;
    gap: 14px;
}

.finish-check {
    width: 30px;
    height: 24px;
    color: #fff;
}

.dots {
    display: flex;
    justify-content: center;
    gap: 24px;
    margin-top: 67px;
}

.dots i {
    width: 20px;
    height: 20px;
    border-radius: 50%;
    background-color: #80a4d3;
}

.dots .on {
    background-color: #33527f;
}

.site-foot {
    flex: 1;
    background-color: #141928;
    border-bottom: 4px solid #4b4c57;
    padding: 60px 0 0 205px;
}

.logo-small {
    width: 180px;
    height: 66px;
    line-height: 84px;
    display: block;
}

.logo-small .logo-text {
    font-size: 62px;
    -webkit-text-stroke: 0;
    color: #5f6268;
}

.logo-small .logo-globe {
    left: 58px;
    top: 5px;
    width: 64px;
    height: 64px;
}

.tagline {
    margin: 13px 0 0;
    font-family: Inter, "Liberation Sans", sans-serif;
    font-size: 28px;
    line-height: 36px;
    font-weight: 500;
    color: #d1d5db;
}

.social {
    display: flex;
    align-items: center;
    gap: 54px;
    margin: 8px 0 0 4px;
    fill: #6b7280;
}

.social svg {
    width: 42px;
    height: 42px;
}

.social .yt {
    width: 40px;
    height: 28px;
}

/* strip of desktop below the window */
.wallpaper {
    width: 2852px;
    height: 139px;
    margin-left: 45px;
    background:
        repeating-linear-gradient(100deg, rgba(255, 255, 255, .03) 0 3px, transparent 3px 8px),
        linear-gradient(#1e1a1c, #46302b);
}

/* dock */
.dock {
    position: absolute;
    left: 107px;
    top: 1757px;
    width: 2726px;
    height: 145px;
    box-sizing: border-box;
    background-color: #3a3236;
    border: 2px solid #4e4a4e;
    border-radius: 40px;
    display: flex;
    align-items: flex-start;
    gap: 32px;
    padding: 18px 0 0 19px;
    z-index: 2;
    box-shadow: 0 6px 18px rgba(0, 0, 0, .25);
}

.dock-item {
    width: 92px;
    flex: none;
    display: flex;
    flex-direction: column;
    align-items: center;
}

.dock-item svg {
    display: block;
    width: 92px;
    height: 93px;
    overflow: visible;
}

.dock-item i {
    width: 7px;
    height: 8px;
    margin-top: 20px;
    border-radius: 50%;
    background-color: #bdb9bd;
}

.dock-item i.none {
    visibility: hidden;
}

.dock-sep {
    width: 1px;
    height: 105px;
    flex: none;
    margin: -1px 10px 0 13px;
    background-color: #6f6a6e;
}

.sep2 {
    margin-right: 7px;
}

.dock-item.doc {
    width: 96px;
    margin-right: 3px;
}

.dock-item.doc svg {
    width: 96px;
    height: 95px;
}

.dock-item.trash {
    width: 82px;
}

.dock-item.trash svg {
    width: 82px;
    height: 105px;
    margin-top: -6px;
}

.dock-badge,
.cal-mon,
.cal-day,
.xl,
.cert,
.pdf {
    text-anchor: middle;
    font-family: Inter, "Liberation Sans", sans-serif;
}

.dock-badge {
    font-size: 28px;
    font-weight: 600;
    fill: #fff;
}

.cal-mon {
    font-size: 20px;
    font-weight: 600;
    fill: #fff;
}

.cal-day {
    font-size: 56px;
    font-weight: 300;
    fill: #222;
}

.xl {
    font-size: 26px;
    fill: #fff;
}

.cert {
    font-size: 6px;
    font-weight: 700;
    fill: #2f63b8;
}

.cert.gray {
    fill: #555;
}

.pdf {
    font-size: 17px;
    fill: #666;
}
```
